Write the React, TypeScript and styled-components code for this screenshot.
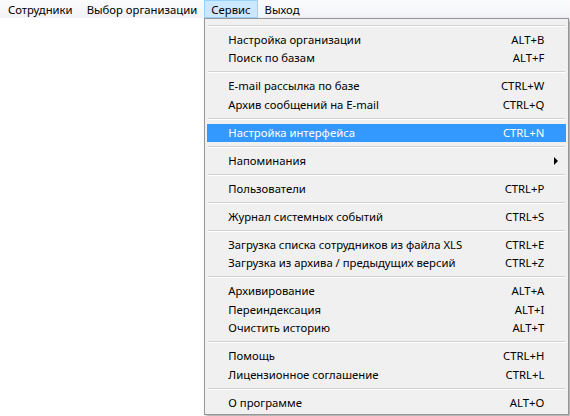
import styled, { createGlobalStyle } from 'styled-components';

const GlobalStyle = createGlobalStyle`
	html, body {
		margin: 0;
		padding: 0;
		background: #ffffff;
	}
	body {
		font-family: 'Noto Sans', 'Liberation Sans', sans-serif;
		font-size: 11.3px;
		color: #000;
	}
`;

type MenuEntry = { label: string; shortcut?: string; submenu?: boolean; active?: boolean } | 'sep';

const topItems = ['Сотрудники', 'Выбор организации', 'Сервис', 'Выход'];

const serviceMenu: MenuEntry[] = [
	'sep',
	{ label: 'Настройка организации', shortcut: 'ALT+B' },
	{ label: 'Поиск по базам', shortcut: 'ALT+F' },
	'sep',
	{ label: 'E-mail рассылка по базе', shortcut: 'CTRL+W' },
	{ label: 'Архив сообщений на E-mail', shortcut: 'CTRL+Q' },
	'sep',
	{ label: 'Настройка интерфейса', shortcut: 'CTRL+N', active: true },
	'sep',
	{ label: 'Напоминания', submenu: true },
	'sep',
	{ label: 'Пользователи', shortcut: 'CTRL+P' },
	'sep',
	{ label: 'Журнал системных событий', shortcut: 'CTRL+S' },
	'sep',
	{ label: 'Загрузка списка сотрудников из файла XLS', shortcut: 'CTRL+E' },
	{ label: 'Загрузка из архива / предыдущих версий', shortcut: 'CTRL+Z' },
	'sep',
	{ label: 'Архивирование', shortcut: 'ALT+A' },
	{ label: 'Переиндексация', shortcut: 'ALT+I' },
	{ label: 'Очистить историю', shortcut: 'ALT+T' },
	'sep',
	{ label: 'Помощь', shortcut: 'CTRL+H' },
	{ label: 'Лицензионное соглашение', shortcut: 'CTRL+L' },
	'sep',
	{ label: 'О программе', shortcut: 'ALT+O' },
];

const App = () => {
	return (
		<>
			<GlobalStyle />
			<MenuBar>
				{topItems.map((t) => (
					<TopItem key={t} $open={t === 'Сервис'}>
						{t}
						{t === 'Сервис' && (
							<Dropdown>
								{serviceMenu.map((entry, i) =>
									entry === 'sep' ? (
										<Separator key={i} />
									) : (
										<Row key={i} $active={entry.active}>
											<Label>{entry.label}</Label>
											{entry.shortcut && <Shortcut>{entry.shortcut}</Shortcut>}
											{entry.submenu && <Arrow />}
										</Row>
									)
								)}
							</Dropdown>
						)}
					</TopItem>
				))}
			</MenuBar>
			<Page />
		</>
	);
};

export default App;

const MenuBar = styled.div`
	display: flex;
	align-items: stretch;
	height: 18px;
	background: linear-gradient(#fbfbfc, #f2f3f6);
`;

const TopItem = styled.div<{ $open?: boolean }>`
	position: relative;
	display: flex;
	align-items: center;
	padding: 0 6px;
	white-space: nowrap;
	border: 1px solid ${(p) => (p.$open ? '#99d1ff' : 'transparent')};
	background: ${(p) => (p.$open ? '#cce8ff' : 'transparent')};
	&:first-child {
		padding-left: 7px;
	}
`;

const Dropdown = styled.div`
	position: absolute;
	left: -1px;
	top: 17px;
	width: 359px;
	padding: 2px;
	background: #f0f0f0;
	border: 1px solid #979797;
	box-shadow: 2px 2px 3px rgba(0, 0, 0, 0.35);
	display: flex;
	flex-direction: column;
	z-index: 10;
`;

const Separator = styled.div`
	height: 9.5px;
	display: flex;
	align-items: center;
	padding: 0 1px;
	&::after {
		content: '';
		flex: 1;
		height: 1px;
		background: #d2d2d2;
		border-bottom: 1px solid #ffffff;
	}
`;

const Row = styled.div<{ $active?: boolean }>`
	position: relative;
	height: 18.5px;
	box-sizing: border-box;
	display: flex;
	align-items: center;
	padding: 0 22px 1px 21px;
	background: ${(p) => (p.$active ? '#3399ff' : 'transparent')};
	color: ${(p) => (p.$active ? '#ffffff' : '#000000')};
	white-space: nowrap;
`;

const Label = styled.span`
	flex: 1;
`;

const Shortcut = styled.span`
	text-align: right;
`;

const Arrow = styled.span`
	position: absolute;
	right: 8px;
	top: 50%;
	transform: translateY(-50%);
	width: 0;
	height: 0;
	border-top: 4px solid transparent;
	border-bottom: 4px solid transparent;
	border-left: 4px solid #000;
`;

const Page = styled.div`
	height: 398px;
	background: #ffffff;
`;
